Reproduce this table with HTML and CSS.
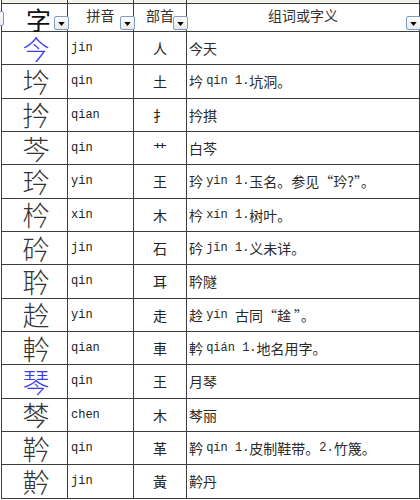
FILE: index.html
```html
<!DOCTYPE html>
<html lang="zh">
<head>
<meta charset="utf-8">
<title>字表</title>
<link rel="stylesheet" href="styles.css">
</head>
<body>
<div class="sheet">
  <div class="c strip"><span class="dd dd-prev"></span></div><div class="c strip"></div><div class="c strip"></div><div class="c strip"></div>

  <div class="c head"><span class="hz">字</span><span class="dd"><svg viewBox="0 0 8 5"><polygon points="0,0 8,0 4,5"/></svg></span></div>
  <div class="c head"><span class="ht">拼音</span><span class="dd"><svg viewBox="0 0 8 5"><polygon points="0,0 8,0 4,5"/></svg></span></div>
  <div class="c head"><span class="ht">部首</span><span class="dd"><svg viewBox="0 0 8 5"><polygon points="0,0 8,0 4,5"/></svg></span></div>
  <div class="c head"><span class="ht">组词或字义</span><span class="dd"><svg viewBox="0 0 8 5"><polygon points="0,0 8,0 4,5"/></svg></span></div>

  <div class="c zi blue">今</div><div class="c py">jin</div><div class="c bs">人</div><div class="c yi">今天</div>
  <div class="c zi">坅</div><div class="c py">qin</div><div class="c bs">土</div><div class="c yi">坅 <span class="lat">qin 1.</span>坑洞。</div>
  <div class="c zi">扲</div><div class="c py">qian</div><div class="c bs">扌</div><div class="c yi">扲掑</div>
  <div class="c zi">芩</div><div class="c py">qin</div><div class="c bs">艹</div><div class="c yi">白芩</div>
  <div class="c zi">玪</div><div class="c py">yin</div><div class="c bs">王</div><div class="c yi">玪 <span class="lat">yin 1.</span>玉名。参见“玪?”。</div>
  <div class="c zi">枔</div><div class="c py">xin</div><div class="c bs">木</div><div class="c yi">枔 <span class="lat">xín 1.</span>树叶。</div>
  <div class="c zi">砛</div><div class="c py">jin</div><div class="c bs">石</div><div class="c yi">砛 <span class="lat">jīn 1.</span>义未详。</div>
  <div class="c zi">耹</div><div class="c py">qin</div><div class="c bs">耳</div><div class="c yi">耹隧</div>
  <div class="c zi">赺</div><div class="c py">yin</div><div class="c bs">走</div><div class="c yi">赺 <span class="lat">yín </span>古同“趛 ”。</div>
  <div class="c zi">軡</div><div class="c py">qian</div><div class="c bs">車</div><div class="c yi">軡 <span class="lat">qián 1.</span>地名用字。</div>
  <div class="c zi blue">琴</div><div class="c py">qin</div><div class="c bs">王</div><div class="c yi">月琴</div>
  <div class="c zi">棽</div><div class="c py">chen</div><div class="c bs">木</div><div class="c yi">棽丽</div>
  <div class="c zi">靲</div><div class="c py">qin</div><div class="c bs">革</div><div class="c yi">靲 <span class="lat">qín 1.</span>皮制鞋带。<span class="lat">2.</span>竹篾。</div>
  <div class="c zi">黅</div><div class="c py">jin</div><div class="c bs">黃</div><div class="c yi">黅丹</div>
</div>
</body>
</html>
```

FILE: styles.css
```css
html, body {
  margin: 0;
  padding: 0;
  background: #ffffff;
}

body {
  font-family: "Noto Sans CJK SC", "Noto Sans", sans-serif;
  color: #2a2a2a;
  overflow: hidden;
}

.sheet {
  display: grid;
  grid-template-columns: 67px 66px 53px 233px;
  grid-template-rows: 4px 28px;
  grid-auto-rows: 33.333px;
  margin-left: 1px;
  width: 419px;
}

.c {
  box-sizing: border-box;
  border-right: 1px solid #3d3d3d;
  border-bottom: 1px solid #3d3d3d;
  display: flex;
  align-items: center;
  position: relative;
  min-width: 0;
}

.c:nth-child(4n+1) {
  border-left: 1px solid #3d3d3d;
}

.strip {
  background: #f4f2ec;
}

.head {
  justify-content: center;
  background: #ffffff;
}

.hz {
  font-size: 25px;
  line-height: 1;
  color: #111;
  margin-top: 3px;
  margin-left: 8px;
}

.ht {
  font-size: 14px;
  line-height: 1;
  color: #333;
  margin-top: -5px;
}

.dd {
  position: absolute;
  right: -2px;
  bottom: 1px;
  width: 15px;
  height: 14px;
  box-sizing: border-box;
  border: 1px solid #7d9cc8;
  border-radius: 2px;
  background: linear-gradient(#ffffff, #e9e9e9);
  display: flex;
  align-items: center;
  justify-content: center;
  z-index: 2;
}

.dd svg {
  width: 7px;
  height: 4px;
  margin-top: 2px;
  fill: #000;
}

.dd-prev {
  left: -13px;
  right: auto;
  top: 11px;
  bottom: auto;
  height: 15px;
}

.zi {
  justify-content: center;
  padding-left: 3px;
  font-size: 27px;
  font-weight: 300;
  line-height: 1;
  color: #333;
}

.zi.blue {
  color: #3b3bf2;
}

.py {
  font-family: "Liberation Mono", monospace;
  font-size: 12px;
  padding-left: 3px;
  color: #222;
}

.bs {
  justify-content: center;
  font-size: 14px;
  color: #222;
}

.yi {
  font-size: 14px;
  padding-left: 2px;
  white-space: pre;
  color: #2a2a2a;
}

.lat {
  font-family: "Liberation Mono", monospace;
  font-size: 12px;
}
```
